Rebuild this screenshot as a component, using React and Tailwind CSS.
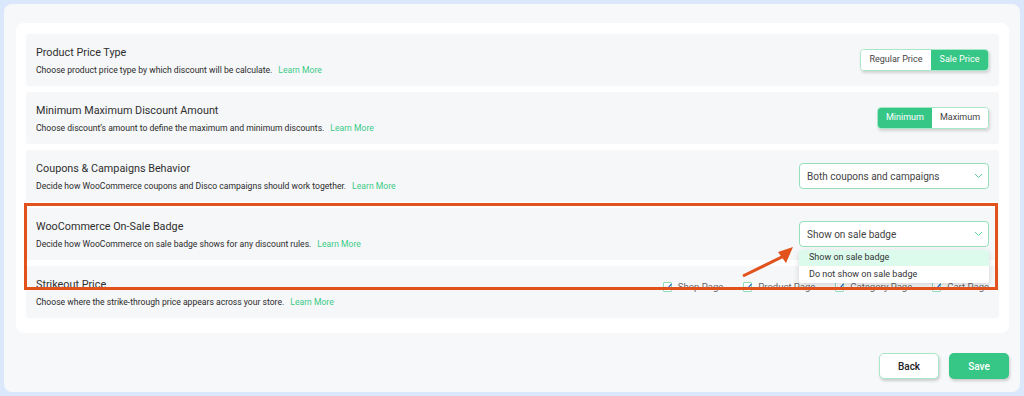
import React from "react";

const font = { fontFamily: "Roboto, 'Liberation Sans', sans-serif" };

function Row({ title, desc, children }) {
  return (
    <div className="h-[52px] bg-[#f6f7f9] rounded-[3px] flex justify-between items-center px-[10px]">
      <div className="flex flex-col">
        <div className="text-[10.8px] leading-[16px] text-[#2f2f2f]">{title}</div>
        <div className="text-[8.6px] leading-[12px] text-[#2a2a2a] mt-[3px]">
          {desc}
          <span className="text-[#3bcb86] ml-[6px]">Learn More</span>
        </div>
      </div>
      {children}
    </div>
  );
}

function Chevron() {
  return (
    <svg width="9" height="6" viewBox="0 0 9 6" fill="none">
      <path d="M1 1l3.5 3.5L8 1" stroke="#5dd39a" strokeWidth="1" />
    </svg>
  );
}

function Check({ label }) {
  return (
    <div className="flex items-center gap-[6px]">
      <div className="w-[9px] h-[10px] border border-[#8fdcb7] rounded-[1px] bg-white relative">
        <svg className="absolute left-[-1px] top-[-1px]" width="10" height="10" viewBox="0 0 10 10" fill="none">
          <path d="M2 5l2 2.2L8.5 2" stroke="#2c6fd1" strokeWidth="1.2" />
        </svg>
      </div>
      <span className="text-[9.5px] text-[#666]">{label}</span>
    </div>
  );
}

export default function App() {
  return (
    <div className="w-[1024px] h-[396px] bg-[#dbe8fb] p-[4px]" style={font}>
      <div className="h-[388px] rounded-[8px] bg-[#f7f8fa] pt-[19px] pl-[12px] pr-[11px] relative">
        <div className="bg-white rounded-[8px] pt-[11px] pb-[15px] px-[10px] flex flex-col gap-[6px]">
          <Row title="Product Price Type" desc="Choose product price type by which discount will be calculate.">
            <div className="flex h-[22px] rounded-[4px] border border-[#a9e7c8] overflow-hidden shadow-[1px_2px_3px_rgba(0,0,0,0.15)] text-[9px]">
              <div className="w-[70px] bg-white text-[#444] flex items-center justify-center">Regular Price</div>
              <div className="w-[57px] bg-[#36c686] text-white flex items-center justify-center">Sale Price</div>
            </div>
          </Row>
          <Row title="Minimum Maximum Discount Amount" desc="Choose discount’s amount to define the maximum and minimum discounts.">
            <div className="flex h-[22px] rounded-[4px] border border-[#a9e7c8] overflow-hidden shadow-[1px_2px_3px_rgba(0,0,0,0.15)] text-[9px]">
              <div className="w-[54px] bg-[#36c686] text-white flex items-center justify-center">Minimum</div>
              <div className="w-[56px] bg-white text-[#444] flex items-center justify-center">Maximum</div>
            </div>
          </Row>
          <Row title="Coupons & Campaigns Behavior" desc="Decide how WooCommerce coupons and Disco campaigns should work together.">
            <div className="w-[190px] h-[26px] rounded-[4px] border border-[#94e0bb] bg-white flex items-center justify-between pl-[7px] pr-[5px] text-[10px] text-[#444]">
              <span>Both coupons and campaigns</span>
              <Chevron />
            </div>
          </Row>
          <Row title="WooCommerce On-Sale Badge" desc="Decide how WooCommerce on sale badge shows for any discount rules.">
            <div className="w-[190px] h-[26px] rounded-[4px] border border-[#94e0bb] bg-white flex items-center justify-between pl-[7px] pr-[5px] text-[10px] text-[#444]">
              <span>Show on sale badge</span>
              <Chevron />
            </div>
          </Row>
          <Row title="Strikeout Price" desc="Choose where the strike-through price appears across your store.">
            <div className="flex items-center gap-[20px] self-start mt-[14px]">
              <Check label="Shop Page" />
              <Check label="Product Page" />
              <Check label="Category Page" />
              <Check label="Cart Page" />
            </div>
          </Row>
        </div>

        <div className="flex justify-end gap-[10px] mt-[20px]">
          <button className="w-[60px] h-[26px] rounded-[5px] bg-white border border-[#a9e7c8] text-[10px] font-medium text-[#222] shadow-[1px_2px_3px_rgba(0,0,0,0.18)]">Back</button>
          <button className="w-[60px] h-[26px] rounded-[5px] bg-[#36c686] text-[10px] font-medium text-white shadow-[1px_2px_3px_rgba(0,0,0,0.18)]">Save</button>
        </div>

        {/* dropdown menu overlay */}
        <div className="absolute left-[795px] top-[246px] w-[190px] bg-white rounded-[3px] shadow-[0_2px_6px_rgba(0,0,0,0.15)] text-[9px] text-[#333] overflow-hidden">
          <div className="h-[16px] bg-[#dcfbec] pl-[10px] flex items-center">Show on sale badge</div>
          <div className="h-[17px] pl-[10px] flex items-center">Do not show on sale badge</div>
        </div>

        {/* annotation frame */}
        <div className="absolute left-[20px] top-[199px] w-[974px] h-[87px] border-[3px] border-[#e1521d] pointer-events-none" />

        {/* arrow */}
        <svg className="absolute left-[730px] top-[236px] pointer-events-none" width="70" height="40" viewBox="0 0 70 40">
          <line x1="9" y1="36" x2="52" y2="15" stroke="#e1521d" strokeWidth="3" />
          <polygon points="59,7 44,12 52,23" fill="#e1521d" />
        </svg>
      </div>
    </div>
  );
}
